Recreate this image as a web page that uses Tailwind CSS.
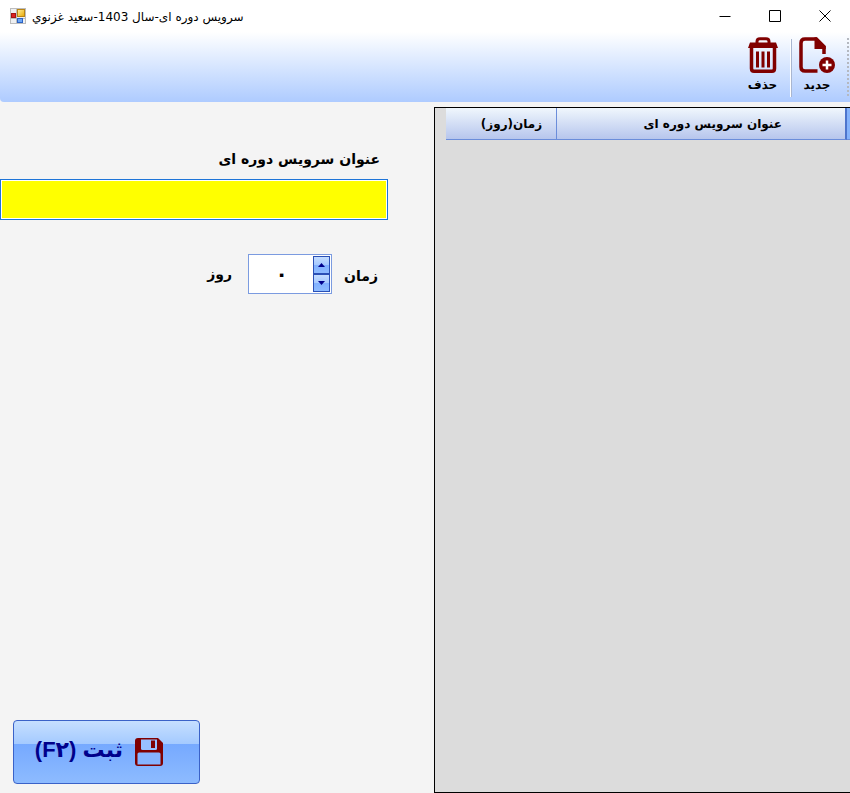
<!DOCTYPE html>
<html lang="fa">
<head>
  <meta charset="UTF-8" />
  <meta name="viewport" content="width=device-width, initial-scale=1.0" />
  <title>سرویس دوره ای</title>
  <script src="https://cdn.jsdelivr.net/npm/@tailwindcss/browser@4"></script>
</head>
<body class="bg-[#f4f4f4] min-h-screen flex flex-col overflow-x-hidden font-['DejaVu_Sans',sans-serif] text-black">
  <!-- Title bar -->
  <header class="h-8 bg-white flex items-center justify-between pl-2.5 shrink-0">
    <div class="flex items-center gap-1.5">
      <svg class="w-4 h-4" viewBox="0 0 16 16">
        <defs>
          <linearGradient id="gold" x1="0" y1="0" x2="1" y2="1">
            <stop offset="0" stop-color="#fff0a0" />
            <stop offset="1" stop-color="#e8a800" />
          </linearGradient>
        </defs>
        <rect x="0.5" y="0.5" width="15" height="15" fill="#eef0f2" stroke="#bcbcbc" />
        <path d="M6.5 1v14M1 10.5h14" stroke="#bcbcbc" />
        <rect x="7.5" y="1.5" width="7" height="7" fill="url(#gold)" stroke="#b98414" />
        <rect x="1.5" y="5.5" width="4" height="4" fill="#d22" stroke="#a31515" />
        <rect x="7.5" y="10.5" width="5" height="4" fill="#6ba6f5" stroke="#2c62c4" />
      </svg>
      <h1 dir="rtl" class="text-[12px] leading-4 pt-0.5 whitespace-nowrap">سرويس دوره ای-سال 1403-سعيد غزنوي</h1>
    </div>
    <div class="flex">
      <button type="button" aria-label="Minimize" class="w-[50px] h-8 flex items-center justify-center">
        <svg class="w-3 h-3" viewBox="0 0 12 12" fill="none" stroke="#000"><path d="M0.5 6.5h11" /></svg>
      </button>
      <button type="button" aria-label="Maximize" class="w-[50px] h-8 flex items-center justify-center">
        <svg class="w-3 h-3" viewBox="0 0 12 12" fill="none" stroke="#000"><path d="M0.5 0.5h11v11h-11z" /></svg>
      </button>
      <button type="button" aria-label="Close" class="w-[50px] h-8 flex items-center justify-center">
        <svg class="w-3 h-3" viewBox="0 0 12 12" fill="none" stroke="#000"><path d="M0.5 0.5l11 11M11.5 0.5l-11 11" /></svg>
      </button>
    </div>
  </header>

  <!-- Toolbar -->
  <nav dir="rtl" class="h-[70px] rounded-bl-sm bg-linear-to-b from-white to-[#aecbff] flex items-start pt-[5px] shrink-0">
    <svg class="w-1 h-[60px]" viewBox="0 0 4 60">
      <path d="M2 1v58" stroke="#b4b8c0" stroke-width="2" stroke-dasharray="2 2" />
    </svg>
    <button type="button" class="w-[54px] pr-1 flex flex-col items-center gap-0.5">
      <svg class="w-9 h-9" viewBox="0 0 36 36">
        <path d="M18.500 34H6Q2 34 2 30V6Q2 2 6 2H17L25 10V17" fill="none" stroke="#800000" stroke-width="3.500" />
        <path d="M15.500 0.250H18L26.750 9V12H15.500z" fill="#800000" />
        <circle cx="28" cy="28" r="8" fill="#800000" />
        <path d="M28 23.500v9M23.500 28h9" stroke="#fff" stroke-width="2.500" />
      </svg>
      <span class="text-[12px] leading-5 font-bold">جدید</span>
    </button>
    <span class="w-0.5 h-[58px] mt-0.5 bg-[#a9b6d0] border-l border-white"></span>
    <button type="button" class="w-[55px] flex flex-col items-center gap-0.5">
      <svg class="w-[30px] h-9" viewBox="0 0 30 36" fill="none" stroke="#800000">
        <path d="M9 6V4.500Q9 1.750 12 1.750H18Q21 1.750 21 4.500V6" stroke-width="3" />
        <path d="M2 5.500H28L30 11H0z" fill="#800000" stroke="none" />
        <path d="M3.500 10V31.500Q3.500 34.250 6 34.250H24Q26.500 34.250 26.500 31.500V10" stroke-width="3.500" />
        <path d="M9.500 14.500V30.500M15 14.500V30.500M20.500 14.500V30.500" stroke-width="3" />
      </svg>
      <span class="text-[12px] leading-5 font-bold">حذف</span>
    </button>
  </nav>

  <main class="flex-1 flex items-stretch">
    <!-- Form -->
    <form class="w-[51%] shrink-0 flex flex-col">
      <div dir="rtl" class="w-[388px] pt-[45px]">
        <label for="title" class="block pr-2 text-[14px] leading-6 font-bold">عنوان سرویس دوره ای</label>
        <input id="title" type="text" class="mt-2 w-full h-[41px] px-2 bg-[#ffff00] border border-[#1e74d8] outline-1 -outline-offset-2 outline-white text-[14px]" />
      </div>
      <div dir="rtl" class="w-[388px] mt-[34px] pr-2.5 flex items-center">
        <label for="days" class="w-9 pt-1 text-[14px] leading-6 font-bold whitespace-nowrap">زمان</label>
        <div class="mr-2.5 w-[84px] h-10 p-px flex flex-row border border-[#7b9be0] bg-white">
          <div class="w-[17px] flex flex-col">
            <button type="button" aria-label="افزایش" class="flex-1 flex items-center justify-center border border-[#2a4fb5] bg-[linear-gradient(to_bottom,#c3dcff_0%,#a5c8ff_50%,#80b0ff_50%,#8dbbff_100%)]">
              <svg class="w-[7px] h-1" viewBox="0 0 7 4"><path d="M0 4L3.500 0L7 4z" fill="#00008b" /></svg>
            </button>
            <button type="button" aria-label="کاهش" class="flex-1 flex items-center justify-center border border-[#2a4fb5] bg-[linear-gradient(to_bottom,#c3dcff_0%,#a5c8ff_50%,#80b0ff_50%,#8dbbff_100%)]">
              <svg class="w-[7px] h-1" viewBox="0 0 7 4"><path d="M0 0L3.500 4L7 0z" fill="#00008b" /></svg>
            </button>
          </div>
          <input id="days" type="text" inputmode="numeric" value="٠" class="min-w-0 flex-1 text-center text-[20px] font-bold outline-none" />
        </div>
        <span class="mr-4 text-[14px] leading-6 font-bold">روز</span>
      </div>
      <button type="submit" dir="rtl" class="mt-auto mb-[9px] ml-[13px] w-[187px] h-16 pr-9 flex items-center gap-3 rounded-sm border border-[#3a62c8] bg-[linear-gradient(to_bottom,#c6dfff_0%,#a4caff_37%,#76a9ff_37%,#8dbbff_100%)] text-[#00008b]">
        <svg class="w-7 h-7" viewBox="0 0 28 28">
          <path d="M3 0H23L28 5V25Q28 28 25 28H3Q0 28 0 25V3Q0 0 3 0z" fill="#800000" />
          <path d="M6 1.500H22V10.500Q22 12 20.500 12H7.500Q6 12 6 10.500z" fill="#98c0ff" />
          <path d="M16 2.500h4v7.500h-4z" fill="#800000" />
          <path d="M2.500 16Q2.500 14.500 4 14.500H24Q25.500 14.500 25.500 16V26.500H2.500z" fill="#86b4ff" />
        </svg>
        <span class="pb-1 text-[22px] leading-7 font-bold whitespace-nowrap font-['Liberation_Sans','DejaVu_Sans',sans-serif]">ثبت (F۲)</span>
      </button>
    </form>

    <!-- Services list -->
    <section class="flex-1 min-w-0 mt-[5px] pl-[11px] border-y border-l border-black bg-[#dcdcdc]">
      <table class="w-full table-fixed border-separate border-spacing-0 text-[12px] leading-4">
        <thead>
          <tr class="h-8 bg-linear-to-b from-[#f0f7fd] to-[#b5c4ec]">
            <th class="w-[111px] pl-5 border-r border-b border-[#6b8dda] font-bold" dir="rtl">زمان(روز)</th>
            <th class="border-r-2 border-r-[#4d74cc] border-b border-b-[#6b8dda] font-bold pl-5" dir="rtl">عنوان سرویس دوره ای</th>
            <td class="w-[3px] bg-[#84b2fb] border-b border-[#6b8dda]"></td>
          </tr>
        </thead>
        <tbody></tbody>
      </table>
    </section>
  </main>
</body>
</html>
